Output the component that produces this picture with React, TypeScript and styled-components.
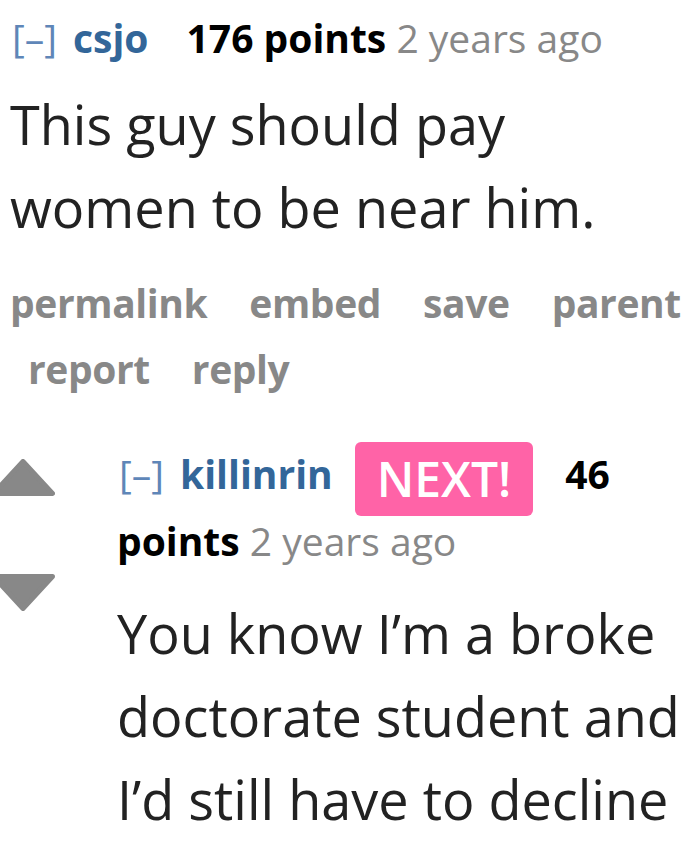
import * as React from 'react'
import styled, { createGlobalStyle } from 'styled-components'

const GlobalStyle = createGlobalStyle`
  html, body {
    margin: 0;
    padding: 0;
    background: #fff;
  }
  body {
    font-family: "Open Sans", "Noto Sans", "Liberation Sans", sans-serif;
    color: #222;
    overflow: hidden;
  }
`

const Page = styled.div`
  width: 700px;
  height: 842px;
  overflow: hidden;
  padding: 10px 0 0 10px;
  box-sizing: border-box;
`

const Tagline = styled.div`
  font-size: 39px;
  line-height: 56px;
`

const Expand = styled.span`
  color: #5f86b8;
  font-weight: 400;
  margin-right: 16px;
  margin-left: 2px;
`

const Author = styled.span<{ $gap: number }>`
  color: #336699;
  font-weight: 700;
  margin-right: ${p => p.$gap}px;
`

const Score = styled.span`
  color: #000;
  font-weight: 700;
`

const Time = styled.span`
  color: #888;
  font-weight: 400;
`

const Body = styled.div<{ $width: number; $top?: number }>`
  width: ${p => p.$width}px;
  margin-top: ${p => p.$top || 0}px;
  font-size: 54px;
  line-height: 83px;
  color: #222;
`

const Actions = styled.ul`
  list-style: none;
  margin: 27px 0 0;
  padding: 0;
  display: flex;
  flex-wrap: wrap;
  column-gap: 42px;
  row-gap: 12px;
  width: 690px;
  font-size: 39px;
  line-height: 54px;
  font-weight: 700;
  color: #888;
  letter-spacing: -0.4px;

  li:nth-child(5) {
    margin-left: 18px;
  }
`

const Child = styled.div`
  display: flex;
  margin-top: 44px;
  margin-left: -10px;
`

const Votes = styled.div`
  width: 117px;
  flex-shrink: 0;
  display: flex;
  flex-direction: column;
  gap: 78px;
  padding-top: 19px;
  margin-left: -9px;
  margin-right: 9px;
`

const ChildEntry = styled.div`
  flex: 1;
`

const ChildTagline = styled(Tagline)`
  line-height: 67px;
`

const Badge = styled.span`
  display: inline-block;
  background: #ff63a7;
  color: #fff;
  font-weight: 600;
  font-size: 48px;
  height: 74px;
  line-height: 74px;
  padding: 0 22px;
  border-radius: 6px;
  vertical-align: middle;
  margin: -12px 32px -12px 0;
`

const Arrow = ({ down }: { down?: boolean }) => (
  <svg width="64" height="37" viewBox="0 0 64 37">
    <polygon
      points={down ? '2.5,2.5 61.5,2.5 32,34.5' : '32,2.5 61.5,34.5 2.5,34.5'}
      fill="#888"
      stroke="#888"
      strokeWidth="5"
      strokeLinejoin="round"
    />
  </svg>
)

export default function App() {
  return (
    <Page>
      <GlobalStyle />
      <Tagline>
        <Expand>[–]</Expand>
        <Author $gap={38}>csjo</Author>
        <Score>176 points</Score> <Time>2 years ago</Time>
      </Tagline>
      <Body $width={600} $top={17}>This guy should pay women to be near him.</Body>
      <Actions>
        <li>permalink</li>
        <li>embed</li>
        <li>save</li>
        <li>parent</li>
        <li>report</li>
        <li>reply</li>
      </Actions>
      <Child>
        <Votes>
          <Arrow />
          <Arrow down />
        </Votes>
        <ChildEntry>
          <ChildTagline>
            <Expand>[–]</Expand>
            <Author $gap={22}>killinrin</Author>
            <Badge>NEXT!</Badge>
            <Score>46 points</Score> <Time>2 years ago</Time>
          </ChildTagline>
          <Body $width={583} $top={18}>
            You know I’m a broke doctorate student and I’d still have to decline
          </Body>
        </ChildEntry>
      </Child>
    </Page>
  )
}
